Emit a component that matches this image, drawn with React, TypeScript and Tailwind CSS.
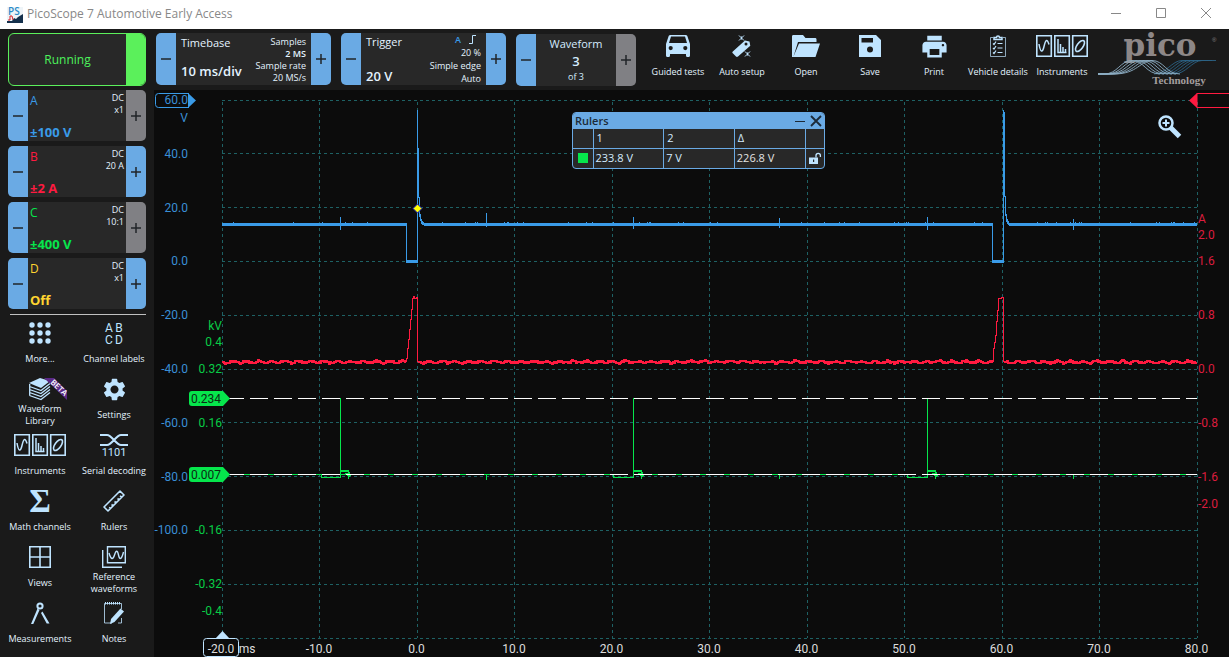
import React from 'react';
import { MdPrint, MdSettings } from 'react-icons/md';

type Tone = 'blue' | 'gray';

const TONES: Record<Tone, string> = {
  blue: 'bg-[#6aaae4]',
  gray: 'bg-[#808084]',
};

/* ---------- icons ---------- */

const Icon: React.FC<{ w: number; h: number; children: React.ReactNode }> = ({ w, h, children }) => (
  <svg width={w} height={h} viewBox={`0 0 ${w} ${h}`} fill="none" className="shrink-0 overflow-visible" aria-hidden="true">
    {children}
  </svg>
);

const CarIcon = () => (
  <Icon w={24} h={22}>
    <path
      fill="currentColor"
      fillRule="evenodd"
      d="M4.5 0h15c1 0 1.7.5 2 1.500L24 9v11.500c0 .8-.6 1.500-1.400 1.500h-1.300c-.8 0-1.300-.6-1.300-1.500V19H4v1.500c0 .9-.5 1.500-1.300 1.500H1.400C.6 22 0 21.300 0 20.500V9l2.500-7.500C2.800.5 3.500 0 4.500 0zM5 1.500L3 8h18l-2-6.500zM4.700 11a2.100 2.100 0 100 4.200 2.100 2.100 0 000-4.200zm14.600 0a2.100 2.100 0 100 4.200 2.100 2.100 0 000-4.200z"
    />
  </Icon>
);

const WandIcon = () => (
  <Icon w={20} h={22}>
    <path fill="currentColor" fillRule="evenodd" d="M13 5.500l4.500 1 .8 4.300L6 21.500c-.8.7-1.500.5-2 0L.8 18.300c-.6-.6-.6-1.300 0-1.900zM14 7.600a1.500 1.500 0 100 3 1.500 1.500 0 000-3z" />
    <path stroke="currentColor" strokeWidth="1" d="M7 .5l5 5M12 .5l-5 5M9.500 1.500v3M13 16.500l5 5M18 16.500l-5 5M15.500 17.500v3" />
  </Icon>
);

const FolderIcon = () => (
  <Icon w={28} h={22}>
    <path fill="currentColor" d="M0 22V1.500C0 .5.500 0 1.500 0H11l2.500 3H23c1 0 1.500.5 1.500 1.500V7H6L1.500 21.500L7 8.500h21L23.500 22z" />
  </Icon>
);

const SaveIcon = () => (
  <Icon w={22} h={22}>
    <path fill="currentColor" fillRule="evenodd" d="M0 0h17l5 5v17H0zM2.500 3v4.500H14V3zM11 11.500a3 3 0 100 6 3 3 0 000-6z" />
  </Icon>
);

const ClipboardIcon = () => (
  <Icon w={16} h={22}>
    <path stroke="currentColor" strokeOpacity="0.7" d="M3 2.500H.5v19h15v-19H13" />
    <path stroke="currentColor" strokeWidth="1.500" d="M4 4.500h8V2.500H9.500A1.500 1.500 0 006.500 2.500H4z" />
    <path stroke="currentColor" strokeWidth="1.200" d="M7.500 8.500h5M7.500 13h5M7.500 17.500h5M3 8.500l1 1 2-3M3 13l1 1 2-3M3 17.500l1 1 2-3" />
  </Icon>
);

const InstrumentsIcon = () => (
  <Icon w={52} h={22}>
    <path stroke="currentColor" strokeWidth="1.600" d="M.8.8h14.500v20.400H.8zM18.800.8h14.500v20.400H18.800zM36.700.8h14.500v20.400H36.700z" />
    <path stroke="currentColor" strokeWidth="1.500" d="M3 9c1.500 9 3.500 9 5 2.500S11 3 13 9.500" />
    <path stroke="currentColor" strokeWidth="1.500" d="M22 4v13.500h8.500M24.500 17V9M27 17v-5M29.500 17v-3" />
    <ellipse cx="44" cy="11" rx="3" ry="6.500" transform="rotate(36 44 11)" stroke="currentColor" strokeWidth="1.600" />
  </Icon>
);

const MoreIcon = () => (
  <Icon w={22} h={22}>
    {[3, 11, 19].map((y) => [3, 11, 19].map((x) => <circle key={`${x}-${y}`} cx={x} cy={y} r="2.700" fill="currentColor" />))}
  </Icon>
);

const LabelsIcon = () => (
  <Icon w={18} h={22}>
    <g fill="currentColor" fontFamily="Roboto, sans-serif" fontSize="12" textAnchor="middle">
      <text x="4" y="10">A</text>
      <text x="14" y="10">B</text>
      <text x="4" y="22">C</text>
      <text x="14" y="22">D</text>
    </g>
  </Icon>
);

const LibraryIcon = () => (
  <Icon w={22} h={22}>
    <path fill="currentColor" d="M0 5L11 0l10 3-9 7z" />
    <path stroke="currentColor" strokeWidth="1.300" d="M.5 8.500l11.500 4 9-7M.5 11.500l11.500 4 9-7M.5 14.500l11.500 4 9-7M.5 17.500l11.500 4 9-7M.7 6v11.500" />
    <path fill="#5b2a86" d="M15 0h10l13 13v9z" />
    <text x="0" y="0" transform="translate(21 5) rotate(43)" fill="#ffffff" fontFamily="Open Sans, sans-serif" fontSize="8" fontWeight="600">
      BETA
    </text>
  </Icon>
);

const SerialIcon = () => (
  <Icon w={28} h={22}>
    <path stroke="currentColor" strokeWidth="2" d="M0 1h7c5 0 9 10 14 10h7M0 11h7c5 0 9-10 14-10h7" />
    <text x="14" y="22" fill="currentColor" fontFamily="Roboto, sans-serif" fontSize="11" textAnchor="middle">1101</text>
  </Icon>
);

const SigmaIcon = () => (
  <Icon w={20} h={22}>
    <text x="10" y="22" fill="currentColor" fontFamily="Liberation Serif, serif" fontSize="33" fontWeight="700" textAnchor="middle">Σ</text>
  </Icon>
);

const RulerIcon = () => (
  <Icon w={22} h={22}>
    <path stroke="currentColor" strokeWidth="1.600" strokeLinejoin="round" d="M1 17L17 1l4 4L5 21zM6 17.500l2 1M8.500 14.500l2 1.500M11.500 11.500l2 1.500M14.500 8.500l2 1.500M17 6l1.500 1" />
  </Icon>
);

const ViewsIcon = () => (
  <Icon w={22} h={22}>
    <path stroke="currentColor" strokeWidth="1.600" d="M.8.8h20.400v20.400H.8zM11 1v20M1 11h20" />
  </Icon>
);

const ReferenceIcon = () => (
  <Icon w={24} h={22}>
    <path stroke="currentColor" strokeWidth="1.400" d="M5.500.7h17.800v16H5.500zM.7 4v17.300H20" />
    <path stroke="currentColor" strokeWidth="1.400" d="M7 7c2 7 4 7 5.500 2s3-5 4 0 3 5 5-3" />
  </Icon>
);

const CompassIcon = () => (
  <Icon w={18} h={22}>
    <circle cx="9" cy="4" r="2.600" stroke="currentColor" strokeWidth="2" />
    <path fill="currentColor" d="M6.500 6.500l2 1.500L2.300 22H0zM11.500 9.500L18.500 21.500h-2.800L10 11z" />
  </Icon>
);

const NotesIcon = () => (
  <Icon w={20} h={22}>
    <path stroke="currentColor" strokeOpacity="0.8" d="M17.500 7V1.500H.5v19.500H8M17.500 16v5H14" />
    <path stroke="currentColor" strokeWidth="2.500" strokeDasharray="1 1" d="M1 1.200h16" />
    <path fill="currentColor" d="M16.500 6.500l3.500 3L10.500 20 6 22l1-5z" />
  </Icon>
);

const EdgeIcon = () => (
  <Icon w={8} h={9}>
    <path stroke="#bfe4ff" strokeWidth="1" d="M0 8.500h3.500v-8H7" />
  </Icon>
);

const PicoLogo = () => (
  <svg viewBox="0 0 124 61" className="h-[61px] w-[124px] shrink-0 overflow-visible" role="img" aria-label="pico Technology">
    <text x="62" y="27" fill="#8d8787" fontFamily="DejaVu Serif, serif" fontSize="31" fontWeight="700" textAnchor="middle">pico</text>
    <text x="114" y="13" fill="#8d8787" fontFamily="Liberation Sans, sans-serif" fontSize="6">®</text>
    <g fill="none" strokeWidth="0.9">
      {[0, 4, 8, 12, 16, 20].map((dx) => (
        <path key={dx} stroke="#2b6285" d={`M${56 + dx} 45C${68 + dx} 45 ${74 + dx} 31.500 ${84 + dx} 31.500H${98 + dx}`} />
      ))}
      {[0, 4, 8, 12, 16, 20].map((dx) => (
        <path key={dx} stroke="#8fb0c6" d={`M0 45H${6 + dx / 2}C${20 + dx} 45 ${22 + dx} 31.500 ${34 + dx} 31.500S${48 + dx} 45 ${62 + dx} 45`} />
      ))}
    </g>
    <text x="81" y="55" fill="#a39e9e" fontFamily="Liberation Serif, serif" fontSize="11" fontWeight="700" textAnchor="middle">Technology</text>
  </svg>
);

/* ---------- controls ---------- */

const StepButton: React.FC<{ kind: 'minus' | 'plus'; label: string; tone?: Tone }> = ({ kind, label, tone = 'blue' }) => (
  <button type="button" aria-label={label} className={`flex w-5 shrink-0 items-center justify-center text-[#202428] ${TONES[tone]}`}>
    <Icon w={10} h={10}>
      <path stroke="currentColor" strokeWidth="1.500" d={kind === 'plus' ? 'M0 5h10M5 0v10' : 'M0 5h10'} />
    </Icon>
  </button>
);

const Stepper: React.FC<{ name: string; className: string; plusTone?: Tone; children: React.ReactNode }> = ({ name, className, plusTone, children }) => (
  <div className={`flex shrink-0 overflow-hidden rounded-[5px] bg-[#282828] ${className}`}>
    <StepButton kind="minus" label={`${name} down`} />
    <div className="flex min-w-0 flex-1">{children}</div>
    <StepButton kind="plus" label={`${name} up`} tone={plusTone} />
  </div>
);

const channels: { id: string; range: string; coupling: string; probe: string; color: string; plus: Tone }[] = [
  { id: 'A', range: '±100 V', coupling: 'DC', probe: 'x1', color: 'text-[#3a9be8]', plus: 'gray' },
  { id: 'B', range: '±2 A', coupling: 'DC', probe: '20 A', color: 'text-[#ff1a40]', plus: 'blue' },
  { id: 'C', range: '±400 V', coupling: 'DC', probe: '10:1', color: 'text-[#06e64c]', plus: 'gray' },
  { id: 'D', range: 'Off', coupling: 'DC', probe: 'x1', color: 'text-[#ffd530]', plus: 'blue' },
];

const sideTools = [
  { label: 'More...', icon: <MoreIcon /> },
  { label: 'Channel labels', icon: <LabelsIcon /> },
  { label: 'Waveform Library', icon: <LibraryIcon /> },
  { label: 'Settings', icon: <MdSettings className="size-[27px] shrink-0" /> },
  { label: 'Instruments', icon: <InstrumentsIcon /> },
  { label: 'Serial decoding', icon: <SerialIcon /> },
  { label: 'Math channels', icon: <SigmaIcon /> },
  { label: 'Rulers', icon: <RulerIcon /> },
  { label: 'Views', icon: <ViewsIcon /> },
  { label: 'Reference waveforms', icon: <ReferenceIcon /> },
  { label: 'Measurements', icon: <CompassIcon /> },
  { label: 'Notes', icon: <NotesIcon /> },
];

const topTools = [
  { label: 'Guided tests', icon: <CarIcon /> },
  { label: 'Auto setup', icon: <WandIcon /> },
  { label: 'Open', icon: <FolderIcon /> },
  { label: 'Save', icon: <SaveIcon /> },
  { label: 'Print', icon: <MdPrint className="size-[29px] shrink-0" /> },
  { label: 'Vehicle details', icon: <ClipboardIcon /> },
  { label: 'Instruments', icon: <InstrumentsIcon /> },
];

const TitleBar = () => (
  <header className="flex h-[29px] items-center bg-white pl-[7px] text-[#888888]">
    <svg width="16" height="16" viewBox="0 0 16 16" className="overflow-visible" aria-hidden="true">
      <rect width="16" height="16" fill="#eef4f8" />
      <text x="1" y="8" fontFamily="Open Sans, sans-serif" fontSize="10" fontWeight="600" fill="#2b8bc8">PS</text>
      <path d="M5 14l2-3 2 1 2-2 5-3v9H5z" fill="#14304c" />
      <path d="M0 14h16v2H0z" fill="#14304c" />
      <path d="M1 13h2V9h2l1 4" stroke="#d8232a" fill="none" />
    </svg>
    <h1 className="ml-1 pb-px text-[12px] leading-4">PicoScope 7 Automotive Early Access</h1>
    <div className="ml-auto flex h-full pr-px pb-[3px]">
      <button type="button" aria-label="Minimise" className="flex w-[45px] items-center justify-center">
        <Icon w={10} h={10}><path stroke="currentColor" d="M0 5.500h10" /></Icon>
      </button>
      <button type="button" aria-label="Maximise" className="flex w-[45px] items-center justify-center">
        <Icon w={10} h={10}><path stroke="currentColor" d="M.5.5h9v9h-9z" /></Icon>
      </button>
      <button type="button" aria-label="Close" className="flex w-[45px] items-center justify-center">
        <Icon w={10} h={10}><path stroke="currentColor" d="M0 0l10 10M10 0L0 10" /></Icon>
      </button>
    </div>
  </header>
);

const Toolbar = () => (
  <div className="flex h-[61px] items-start gap-[10px] px-2 pt-1">
    <button type="button" className="flex h-[53px] w-[138px] shrink-0 overflow-hidden rounded-[6px] border border-[#5bf05b] bg-[#282828] text-[12px] text-[#4df25c]">
      <span className="flex h-full flex-1 items-center justify-center pt-px">Running</span>
      <span className="h-full w-[19px] bg-[#5bf05b]" />
    </button>

    <Stepper name="Timebase" className="h-[52px] w-[175px]">
      <div className="flex flex-1 flex-col justify-between pt-[2px] pb-[6px] pl-[5px] text-[#e4f3ff]">
        <span className="text-[11px] leading-4">Timebase</span>
        <strong className="text-[13px] leading-4 font-semibold whitespace-nowrap">10 ms/div</strong>
      </div>
      <div className="pt-[3px] pr-[5px] text-right text-[9px] leading-3 whitespace-nowrap text-[#e4f3ff]">
        <div>Samples</div>
        <div className="font-semibold">2 MS</div>
        <div>Sample rate</div>
        <div>20 MS/s</div>
      </div>
    </Stepper>

    <Stepper name="Trigger" className="h-[52px] w-[165px]">
      <div className="flex flex-1 flex-col justify-between pt-[1px] pb-[1px] pl-[5px] text-[#e4f3ff]">
        <span className="text-[11px] leading-4">Trigger</span>
        <strong className="text-[13px] leading-4 font-semibold">20 V</strong>
      </div>
      <div className="pr-[5px] text-right text-[9px] leading-[13px] whitespace-nowrap text-[#e4f3ff]">
        <div className="flex items-center justify-end gap-2 pr-1">
          <span className="font-semibold text-[#3a9be8]">A</span>
          <EdgeIcon />
        </div>
        <div>20 %</div>
        <div>Simple edge</div>
        <div>Auto</div>
      </div>
    </Stepper>

    <Stepper name="Waveform" className="mt-px h-[52px] w-[120px]" plusTone="gray">
      <div className="flex flex-1 flex-col items-center pt-[2px] text-[#d4ecff]">
        <span className="text-[11px] leading-4">Waveform</span>
        <strong className="text-[13px] leading-[18px] font-semibold">3</strong>
        <span className="text-[9px] leading-[14px]">of 3</span>
      </div>
    </Stepper>

    <nav className="flex">
      {topTools.map((t) => (
        <button key={`top-${t.label}`} type="button" className="flex w-16 flex-col items-center pt-[2px] text-[#bfe4ff]">
          <span className="flex h-[22px] items-center justify-center">{t.icon}</span>
          <span className="mt-[9px] text-[9px] leading-3 whitespace-nowrap text-[#e4f3ff]">{t.label}</span>
        </button>
      ))}
    </nav>

    <div className="-mt-1 -ml-[6px]">
      <PicoLogo />
    </div>
  </div>
);

const Sidebar = () => (
  <aside className="w-[154px] shrink-0 px-2">
    <div className="flex flex-col gap-[5px]">
      {channels.map((c) => (
        <Stepper key={c.id} name={`Channel ${c.id}`} className="h-[51px] w-full" plusTone={c.plus}>
          <div className={`flex flex-1 flex-col justify-between pt-[3px] pb-[1px] pl-[2px] ${c.color}`}>
            <span className="text-[12px] leading-4 font-medium">{c.id}</span>
            <strong className="text-[13px] leading-4 font-bold whitespace-nowrap">{c.range}</strong>
          </div>
          <div className="pt-[2px] pr-[2px] text-right text-[9px] leading-3 whitespace-nowrap text-[#e4f3ff]">
            <div>{c.coupling}</div>
            <div>{c.probe}</div>
          </div>
        </Stepper>
      ))}
    </div>
    <hr className="mt-[5px] ml-[2px] border-[#c0c0c0]" />
    <div className="-mx-[5px] mt-1 grid grid-cols-2">
      {sideTools.map((t) => (
        <button key={t.label} type="button" className="flex h-14 flex-col items-center pt-[3px] text-[#bfe4ff]">
          <span className="flex h-[22px] items-center justify-center">{t.icon}</span>
          <span className="flex h-[30px] w-full items-center justify-center text-center text-[9px] leading-3 text-[#e4f3ff]">
            <span className={t.label.length > 15 ? 'w-14' : 'whitespace-nowrap'}>{t.label}</span>
          </span>
        </button>
      ))}
    </div>
  </aside>
);

/* ---------- scope view ---------- */

const gridX = Array.from({ length: 11 }, (_, i) => Math.floor(222 + i * 97.5) + 0.5);
const gridY = Array.from({ length: 11 }, (_, i) => Math.floor(100 + i * 53.8) + 0.5);

// small repeatable generator so the noise floor looks the same on every render
const makeRandom = (seed: number) => () => {
  seed = (seed * 1103515245 + 12345) % 2147483648;
  return seed / 2147483648;
};

const noise = (from: number, to: number, level: number, seed: number) => {
  const rnd = makeRandom(seed);
  let d = `M${from} ${level}`;
  for (let x = from; x < to; x += 1) {
    d += `V${Math.round(level + Math.sin(x * 0.48) * 0.9 + (rnd() - 0.5) * 1.8)}h1`;
  }
  return d;
};

const redFloor = noise(222, 406, 362, 7) + noise(418, 993, 362, 21) + noise(1004, 1197, 362, 33);
const redPulses =
  'M406.500 362V358H407.500V348H408.500V339H409.500V329H410.500V319H411.500V309H412.500V298.500H413.500V296.500H414.500V298.500H416.500V297.500H417.500V362' +
  'M993.500 362V348H994.500V342H995.500V335H996.500V321H997.500V310H998.500V298.500H1001.500V297.500H1003.500V362';

const blips = (() => {
  const rnd = makeRandom(99);
  let d = '';
  for (let i = 0; i < 60; i += 1) {
    const x = Math.round(224 + rnd() * 970) + 0.5;
    if ((x > 400 && x < 428) || (x > 988 && x < 1012)) continue;
    d += `M${x} 222V224`;
  }
  return d;
})();

const leftBlue: [string, number][] = [
  ['60.0', 104], ['V', 122], ['40.0', 158], ['20.0', 212], ['0.0', 265], ['-20.0', 319],
  ['-40.0', 373], ['-60.0', 427], ['-80.0', 481], ['-100.0', 534],
];
const leftGreen: [string, number][] = [
  ['kV', 330], ['0.4', 346], ['0.32', 373], ['0.16', 427], ['-0.16', 534], ['-0.32', 588], ['-0.4', 615],
];
const rightRed: [string, number][] = [
  ['A', 223], ['2.0', 239], ['1.6', 265], ['0.8', 319], ['0.0', 373], ['-0.8', 427], ['-1.6', 481], ['-2.0', 508],
];
const timeLabels = ['-10.0', '0.0', '10.0', '20.0', '30.0', '40.0', '50.0', '60.0', '70.0', '80.0'];

const ScopeChart = () => (
  <svg viewBox="154 90 1075 567" className="block h-auto w-full" fontFamily="Roboto, sans-serif" fontSize="12" role="img" aria-label="Scope view">
    <g stroke="#1e6164" strokeDasharray="3 3" shapeRendering="crispEdges">
      {gridX.map((x) => <path key={x} d={`M${x} 102V638`} />)}
      {gridY.map((y) => <path key={y} d={`M222 ${y}H1197`} />)}
    </g>

    <g fill="none" shapeRendering="crispEdges">
      {/* channel A */}
      <path stroke="#3a9be8" strokeWidth="3" d="M222 224.500H407M424 224.500H993M1009 224.500H1197M406 261.500H418M992 261.500H1004" />
      <path stroke="#3a9be8" d="M406.500 223V262M417.500 110V262M418.500 148V198M419.500 197V217M420.500 214V221M421.500 219V224M422.500 221V225M423.500 222V225" />
      <path stroke="#3a9be8" d="M992.500 223V262M1003.500 110V262M1004.500 112V197M1005.500 196V216M1006.500 214V222M1007.500 219V224M1008.500 221V225" />
      <path stroke="#3a9be8" d="M340.500 217V230M486.500 213V227M633.500 217V229M779.500 218V228M927.500 217V230M1073.500 219V230" />
      <path stroke="#3a9be8" d={blips} />

      {/* channel B */}
      <path stroke="#ff1a40" strokeWidth="2" d={redFloor} />
      <path stroke="#ff1a40" d={redPulses} />

      {/* channel C with its two rulers */}
      <path stroke="#06e64c" d="M229 474.500H321.500V477.500H340.500V398M340.500 474.500H613.500V477.500H633.500V398M633.500 474.500H907.500V477.500H927.500V398M927.500 474.500H1197M486.500 474V480M779.500 474V479M1073.500 474V479" />
      {[341, 634, 928].map((x) => (
        <g key={x} stroke="#06e64c">
          <path strokeWidth="2" d={`M${x} 471H${x + 7}`} />
          <path d={`M${x + 7.500} 470V479M${x + 4} 473.500H${x + 9}M${x + 6} 475.500H${x + 10}M${x + 8.500} 472V477`} />
        </g>
      ))}
      <path stroke="#ffffff" strokeDasharray="18 6" d="M226 398.500H1197M226 474.500H1197" />
    </g>

    <path d="M417.500 204l4.500 4.500-4.500 4.500-4.500-4.500z" fill="#ffff00" stroke="#1010c0" />

    {/* axis handles */}
    <path d="M189 93.500H158.500a3 3 0 00-3 3v8a3 3 0 003 3H189" fill="none" stroke="#3a9be8" />
    <path d="M188 93l8 7.500-8 7.500z" fill="#3a9be8" />
    <path d="M1229 93.500H1197V107.500H1229" fill="none" stroke="#ff1a40" />
    <path d="M1197 93l-8 7.500 8 7.500z" fill="#ff1a40" />
    <path d="M215.500 638.500l7-7.500 7 7.500z" fill="#bfe4ff" />
    <rect x="203.500" y="638.500" width="35" height="18" rx="3" fill="#0c0c0c" stroke="#bfe4ff" />

    <g fill="#3a8fd6" textAnchor="end">
      {leftBlue.map(([t, y]) => <text key={t} x="188" y={y}>{t}</text>)}
    </g>
    <g fill="#08cc46" textAnchor="end">
      {leftGreen.map(([t, y]) => <text key={t} x="222" y={y}>{t}</text>)}
    </g>
    <g fill="#dc1c3e">
      {rightRed.map(([t, y]) => <text key={t} x="1198" y={y}>{t}</text>)}
    </g>
    <g fill="#dddddd" textAnchor="middle">
      <text x="221" y="653">-20.0</text>
      <text x="247" y="653">ms</text>
      {timeLabels.map((t, i) => <text key={t} x={319 + i * 97.5} y="653">{t}</text>)}
    </g>

    {[{ y: 398.5, value: '0.234' }, { y: 474.5, value: '0.007' }].map((r) => (
      <g key={r.value}>
        <path d={`M192 ${r.y - 7.5}H223L230 ${r.y}L223 ${r.y + 7.5}H192a3 3 0 01-3-3v-9a3 3 0 013-3z`} fill="#06e64c" />
        <text x="206" y={r.y + 4} fill="#0c2a14" textAnchor="middle">{r.value}</text>
      </g>
    ))}
  </svg>
);

const RulersPanel = () => (
  <section className="absolute top-[22px] left-[418px] w-[253px] overflow-hidden rounded-[4px] border border-[#6aaae4] bg-[#282828] text-[11px] text-[#d4ecff]">
    <div className="flex h-4 items-center bg-[#6aaae4] pr-[3px] pl-[2px] text-[#1c2a38]">
      <h2 className="pt-px font-semibold">Rulers</h2>
      <button type="button" aria-label="Minimise rulers" className="ml-auto">
        <Icon w={10} h={10}><path stroke="currentColor" d="M0 5.500h10" /></Icon>
      </button>
      <button type="button" aria-label="Close rulers" className="ml-[6px]">
        <Icon w={10} h={10}><path stroke="currentColor" strokeWidth="1.800" d="M0 0l10 10M10 0L0 10" /></Icon>
      </button>
    </div>
    <table className="w-full table-fixed border-collapse text-left">
      <thead>
        <tr className="h-[19px] border-b border-[#6aaae4]">
          <th aria-label="Channel" className="w-5 border-r border-[#6aaae4]" />
          <th className="border-r border-[#6aaae4] pl-[3px] leading-4 font-normal">1</th>
          <th className="border-r border-[#6aaae4] pl-[3px] leading-4 font-normal">2</th>
          <th className="border-r border-[#6aaae4] pl-[3px] leading-4 font-normal">Δ</th>
          <th aria-label="Lock" className="w-[19px]" />
        </tr>
      </thead>
      <tbody>
        <tr className="h-5">
          <td className="border-r border-[#6aaae4]"><span className="mx-auto block size-[10px] bg-[#06e64c]" /></td>
          <td className="border-r border-[#6aaae4] pl-[2px] leading-4">233.8 V</td>
          <td className="border-r border-[#6aaae4] pl-[2px] leading-4">7 V</td>
          <td className="border-r border-[#6aaae4] pl-[2px] leading-4 text-[#e4e4e4]">226.8 V</td>
          <td>
            <button type="button" aria-label="Lock rulers" className="mx-auto block text-[#bfe4ff]">
              <Icon w={12} h={11}>
                <path fill="currentColor" fillRule="evenodd" d="M0 4.500h9V11H0zM4 6.500v2.500h1.200V6.500z" />
                <path stroke="currentColor" strokeWidth="1.300" d="M7 4.500V2.500a2.200 2.200 0 014.400 0V4" />
              </Icon>
            </button>
          </td>
        </tr>
      </tbody>
    </table>
  </section>
);

const App: React.FC = () => (
  <div className="min-h-screen overflow-hidden bg-[#1a1a1a] font-['Open_Sans',sans-serif]">
    <TitleBar />
    <Toolbar />
    <div className="flex">
      <Sidebar />
      <main className="relative min-w-0 flex-1 bg-[#0c0c0c]">
        <ScopeChart />
        <RulersPanel />
        <button type="button" aria-label="Zoom in" className="absolute top-[25px] right-12 text-[#bfe4ff]">
          <Icon w={23} h={23}>
            <circle cx="8" cy="8" r="6.500" stroke="currentColor" strokeWidth="2.500" />
            <path stroke="currentColor" strokeWidth="2" d="M4.500 8h7M8 4.500v7" />
            <path stroke="currentColor" strokeWidth="5" d="M12.500 12.500l9 9" />
          </Icon>
        </button>
      </main>
    </div>
  </div>
);

export default App;
